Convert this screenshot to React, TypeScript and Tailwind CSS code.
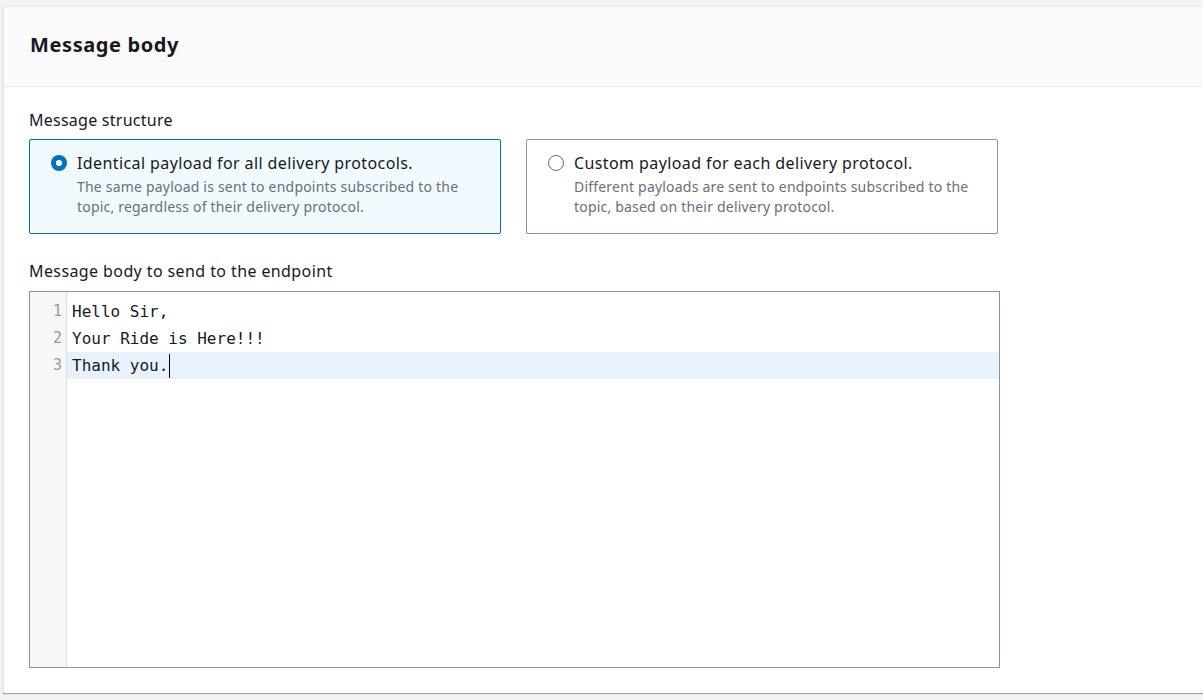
import { useState } from 'react';

type Option = {
  id: string;
  title: string;
  description: string;
};

const options: Option[] = [
  {
    id: 'identical',
    title: 'Identical payload for all delivery protocols.',
    description:
      'The same payload is sent to endpoints subscribed to the topic, regardless of their delivery protocol.',
  },
  {
    id: 'custom',
    title: 'Custom payload for each delivery protocol.',
    description:
      'Different payloads are sent to endpoints subscribed to the topic, based on their delivery protocol.',
  },
];

const lines = ['Hello Sir,', 'Your Ride is Here!!!', 'Thank you.'];

const Radio = ({ checked }: { checked: boolean }) =>
  checked ? (
    <span className="mt-1 flex h-4 w-4 shrink-0 items-center justify-center rounded-full bg-[#0073bb]">
      <span className="h-[6px] w-[6px] rounded-full bg-white" />
    </span>
  ) : (
    <span className="mt-1 h-4 w-4 shrink-0 rounded-full border-[1.5px] border-[#687078] bg-white" />
  );

const App = () => {
  const [selected, setSelected] = useState('identical');

  return (
    <div
      className="h-[700px] w-full overflow-hidden bg-[#f2f3f3] pl-[3px] pt-[6px] text-[#16191f]"
      style={{ fontFamily: '"Noto Sans", "Open Sans", sans-serif' }}
    >
      <div className="h-[687px] w-[1210px] border-l border-t border-[#eaeded] bg-white shadow-[0_1px_1px_0_rgba(0,28,36,0.35)]">
        <div className="flex h-[80px] items-center border-b border-[#eaeded] bg-[#fafafa] pb-[4px] pl-[26px]">
          <h2 className="text-[20px] font-bold tracking-[0.6px]">Message body</h2>
        </div>

        <div className="px-[25px] pt-[22px]">
          <p className="mb-2 text-[16px] leading-[22px] tracking-[0.25px]">Message structure</p>

          <div className="flex gap-[25px]">
            {options.map((opt) => {
              const checked = selected === opt.id;
              return (
                <button
                  key={opt.id}
                  onClick={() => setSelected(opt.id)}
                  className={`flex h-[95px] w-[472px] gap-[10px] rounded-[2px] border pl-[21px] pr-4 pt-[11px] text-left ${
                    checked
                      ? 'border-[#0073bb] bg-[#f1faff]'
                      : 'border-[#879596] bg-white'
                  }`}
                >
                  <Radio checked={checked} />
                  <span className="flex flex-col">
                    <span className="text-[16px] leading-6 tracking-[0.4px]">{opt.title}</span>
                    <span className="mt-[2px] text-[14px] leading-5 tracking-[0.2px] text-[#687078]">
                      {opt.description}
                    </span>
                  </span>
                </button>
              );
            })}
          </div>

          <p className="mb-[9px] mt-[26px] text-[16px] leading-[22px] tracking-[0.4px]">
            Message body to send to the endpoint
          </p>

          <div
            className="flex h-[377px] w-[971px] border border-[#879596]"
            style={{ fontFamily: '"DejaVu Sans Mono", "Liberation Mono", monospace' }}
          >
            <div className="w-[37px] shrink-0 border-r border-[#dddddd] bg-[#f7f7f7] pt-[6px]">
              {lines.map((_, i) => (
                <div
                  key={i}
                  className="pr-[4px] text-right text-[15px] leading-[27px] text-[#999999]"
                >
                  {i + 1}
                </div>
              ))}
            </div>
            <div className="flex-1 pt-[6px]">
              {lines.map((line, i) => (
                <div
                  key={i}
                  className={`flex h-[27px] items-center pl-[5px] text-[16px] leading-[27px] ${
                    i === lines.length - 1 ? 'bg-[#e8f2fc]' : ''
                  }`}
                >
                  <span className="whitespace-pre">{line}</span>
                  {i === lines.length - 1 && (
                    <span className="ml-[1px] h-[24px] w-[1px] bg-black" />
                  )}
                </div>
              ))}
            </div>
          </div>
        </div>
      </div>
    </div>
  );
};

export default App;
